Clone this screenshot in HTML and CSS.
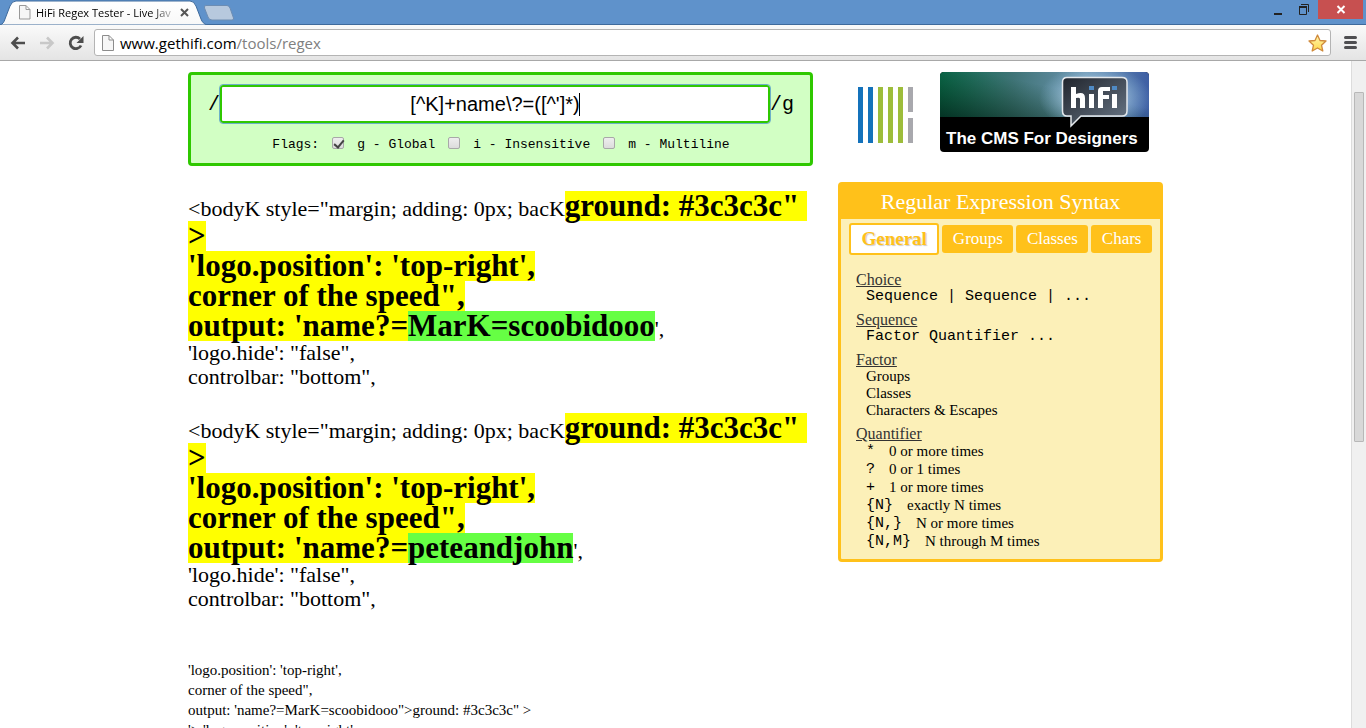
FILE: index.html
```html
<!DOCTYPE html>
<html lang="en">
<head>
<meta charset="utf-8">
<title>HiFi Regex Tester - Live JavaScript Regular Expression Tester</title>
<link rel="stylesheet" href="styles.css">
</head>
<body>
<header class="browser">
  <div class="titlebar">
    <div class="tab">
      <svg class="tab-shape" width="208" height="25" viewBox="0 0 208 25" aria-hidden="true">
        <defs><linearGradient id="tabfill" x1="0" y1="0" x2="0" y2="1"><stop offset="0" stop-color="#fff"/><stop offset="1" stop-color="#f8f8f8"/></linearGradient></defs>
        <path d="M0 25C3 24 4 22 5 19L10 6Q12 1 16 1H190Q194 1 196 6L201 19C202 22 204 24 207 25Z" fill="url(#tabfill)" stroke="#3e6a9c"/>
      </svg>
      <svg class="tab-page" width="12" height="15" viewBox="0 0 12 15" aria-hidden="true"><path d="M.5.5H7L11 4.500V14H.5ZM7 .5V4.500H11" fill="#f6f6f6" stroke="#999"/></svg>
      <span class="tab-title">HiFi Regex Tester - Live Jav</span>
      <button class="tab-close" aria-label="Close tab"><svg width="9" height="9" viewBox="0 0 9 9"><path d="M1 1L8 8M8 1L1 8" stroke="#555" stroke-width="2"/></svg></button>
    </div>
    <button class="new-tab" aria-label="New tab"><svg width="32" height="16" viewBox="0 0 32 16"><path d="M3 .5H24Q26 .5 27 3L30.500 13Q31 15 29 15H9Q6 15 5 12L1.500 3Q.8.5 3 .5Z" fill="#b7c9de" stroke="#6d8db3"/></svg></button>
    <div class="window-controls">
      <button class="win-btn" aria-label="Minimize"><svg width="12" height="14" viewBox="0 0 12 14"><path d="M2 11H10" stroke="#222" stroke-width="2"/></svg></button>
      <button class="win-btn" aria-label="Restore"><svg width="12" height="14" viewBox="0 0 12 14"><path d="M1.500 4V11.500H8.500V4M3 1.500H10.500V9" fill="none" stroke="#222"/><path d="M1 4H9" stroke="#222" stroke-width="2"/></svg></button>
      <button class="win-btn win-close" aria-label="Close"><svg width="10" height="9" viewBox="0 0 10 9"><path d="M1.500 1L8.500 8M8.500 1L1.500 8" stroke="#fff" stroke-width="2"/></svg></button>
    </div>
  </div>
  <nav class="toolbar">
    <button class="nav-btn" aria-label="Back"><svg width="16" height="14" viewBox="0 0 16 14"><path d="M15 7H2.500M8 1.500L2.500 7L8 12.500" fill="none" stroke="#4d4d4d" stroke-width="2.600"/></svg></button>
    <button class="nav-btn" aria-label="Forward"><svg width="16" height="14" viewBox="0 0 16 14"><path d="M1 7H13.500M8 1.500L13.500 7L8 12.500" fill="none" stroke="#c8c8c8" stroke-width="2.600"/></svg></button>
    <button class="nav-btn" aria-label="Reload"><svg width="16" height="16" viewBox="0 0 16 16"><path d="M13 10.500A5.700 5.700 0 1 1 12 4" fill="none" stroke="#4d4d4d" stroke-width="2.800"/><path d="M15.500 1V8H8.500Z" fill="#4d4d4d"/></svg></button>
    <div class="omnibox">
      <svg width="12" height="16" viewBox="0 0 12 16" aria-hidden="true"><path d="M.5.5H7L11.500 5V15.500H.5ZM7 .5V5H11.500" fill="#f6f6f6" stroke="#8c8c8c"/></svg>
      <span class="url">www.gethifi.com<span class="url-path">/tools/regex</span></span>
      <button class="star" aria-label="Bookmark"><svg width="19" height="18" viewBox="0 0 19 18"><defs><linearGradient id="gold" x1="0" y1="0" x2="0" y2="1"><stop offset="0" stop-color="#fff6b0"/><stop offset="1" stop-color="#ffd84a"/></linearGradient></defs><path d="M9.500 1L12 6.500L18 7L13.500 11.200L14.800 17L9.500 14L4.200 17L5.500 11.200L1 7L7 6.500Z" fill="url(#gold)" stroke="#d08a3c" stroke-width="1.300" stroke-linejoin="round"/></svg></button>
    </div>
    <button class="nav-btn menu" aria-label="Menu"><svg width="13" height="13" viewBox="0 0 13 13"><path d="M1.500 1.500H11.500M1.500 6.500H11.500M1.500 11.500H11.500" stroke="#4f4f52" stroke-width="3" stroke-linecap="round"/></svg></button>
  </nav>
</header>

<div class="viewport">
  <div class="page">
    <main class="main">
      <form class="regex-box">
        <div class="regex-row">
          <span>/</span>
          <div class="field">
            <input class="regex-input" type="text" aria-label="Regular expression" value="[^K]+name\?=([^']*)">
            <span class="caret"></span>
          </div>
          <span>/g</span>
        </div>
        <div class="flags">
          <span>Flags:</span>
          <label class="flag"><input type="checkbox" checked>g - Global</label>
          <label class="flag"><input type="checkbox">i - Insensitive</label>
          <label class="flag"><input type="checkbox">m - Multiline</label>
        </div>
      </form>
      <pre class="result">&lt;bodyK style="margin; adding: 0px; bacK<mark>ground: #3c3c3c" </mark>
<mark>&gt;</mark>
<mark>'logo.position': 'top-right',</mark>
<mark>corner of the speed",</mark>
<mark>output: 'name?=</mark><mark class="group">MarK=scoobidooo</mark>',
'logo.hide': "false",
controlbar: "bottom",

&lt;bodyK style="margin; adding: 0px; bacK<mark>ground: #3c3c3c" </mark>
<mark>&gt;</mark>
<mark>'logo.position': 'top-right',</mark>
<mark>corner of the speed",</mark>
<mark>output: 'name?=</mark><mark class="group">peteandjohn</mark>',
'logo.hide': "false",
controlbar: "bottom",</pre>
      <pre class="matches">'logo.position': 'top-right',
corner of the speed",
output: 'name?=MarK=scoobidooo"&gt;ground: #3c3c3c" &gt;
'&gt; 'logo.position': 'top-right',</pre>
    </main>
    <aside class="side">
      <div class="brands">
        <svg width="55" height="56" viewBox="0 0 55 56" role="img" aria-label="Logo"><path d="M0 0H5V56H0ZM10 0H15V56H10Z" fill="#1472bb"/><path d="M20 0H25V56H20ZM30 0H35V56H30ZM40 0H45V56H40Z" fill="#9dbd3b"/><path d="M50 0H55V25H50ZM50 31H55V56H50Z" fill="#a8a8ad"/></svg>
        <a class="banner" href="#">
          <svg width="209" height="80" viewBox="0 0 209 80">
            <defs>
              <linearGradient id="sky" x1="0" y1="0" x2="1" y2="0"><stop offset="0" stop-color="#0b6a4c"/><stop offset=".35" stop-color="#3f7477"/><stop offset=".7" stop-color="#6d94b0"/><stop offset="1" stop-color="#3e5fa4"/></linearGradient>
              <linearGradient id="shade" x1="1" y1="0" x2="0" y2="1"><stop offset=".4" stop-color="#031" stop-opacity="0"/><stop offset="1" stop-color="#021c14" stop-opacity=".7"/></linearGradient>
              <radialGradient id="glow"><stop offset="0" stop-color="#d6ecf6" stop-opacity=".9"/><stop offset=".6" stop-color="#a8cde6" stop-opacity=".5"/><stop offset="1" stop-color="#8fbfe0" stop-opacity="0"/></radialGradient>
              <linearGradient id="bubble" x1="0" y1="0" x2="1" y2="1"><stop offset="0" stop-color="#20242c"/><stop offset="1" stop-color="#6a7888"/></linearGradient>
              <clipPath id="skyclip"><path d="M0 45V4Q0 0 4 0H205Q209 0 209 4V45Z"/></clipPath>
            </defs>
            <rect width="209" height="80" rx="4"/>
            <g clip-path="url(#skyclip)">
              <rect width="209" height="45" fill="url(#sky)"/>
              <rect width="209" height="45" fill="url(#shade)"/>
              <ellipse cx="155" cy="26" rx="56" ry="34" fill="url(#glow)"/>
            </g>
            <path d="M127 5.500H182Q187 5.500 187 10V39Q187 44 182 44H141L131 54V44H127Q122.500 44 122.500 39V10Q122.500 5.500 127 5.500Z" fill="url(#bubble)" stroke="#e4e8ec" stroke-width="1.500"/>
            <path d="M131 15H136V22Q145 19 145 26V36H140V27Q140 25 136 26V36H131ZM149 22H154V36H149ZM158 36V19Q158 15 162 15H170V19H163V23H169V27H163V36ZM172 22H177V36H172Z" fill="#fff"/>
            <path d="M149 14H154V18H149ZM172 14H177V18H172Z" fill="#4f8ac4"/>
            <text class="banner-text" x="6" y="72">The CMS For Designers</text>
          </svg>
        </a>
      </div>
      <section class="syntax">
        <h2>Regular Expression Syntax</h2>
        <div class="tabs">
          <button class="active">General</button><button>Groups</button><button>Classes</button><button>Chars</button>
        </div>
        <dl class="terms">
          <dt>Choice</dt>
          <dd><code>Sequence | Sequence | ...</code></dd>
          <dt>Sequence</dt>
          <dd><code>Factor Quantifier ...</code></dd>
          <dt>Factor</dt>
          <dd>Groups</dd>
          <dd>Classes</dd>
          <dd>Characters &amp; Escapes</dd>
          <dt>Quantifier</dt>
          <dd class="quant"><code>*</code><span>0 or more times</span></dd>
          <dd class="quant"><code>?</code><span>0 or 1 times</span></dd>
          <dd class="quant"><code>+</code><span>1 or more times</span></dd>
          <dd class="quant"><code>{N}</code><span>exactly N times</span></dd>
          <dd class="quant"><code>{N,}</code><span>N or more times</span></dd>
          <dd class="quant"><code>{N,M}</code><span>N through M times</span></dd>
        </dl>
      </section>
    </aside>
  </div>
  <div class="scrollbar"><div class="thumb"></div></div>
</div>
</body>
</html>
```
FILE: styles.css
```css
* { box-sizing: border-box; }
body {
  margin: 0;
  height: 100vh;
  display: flex;
  flex-direction: column;
  overflow: hidden;
  background: #fff;
  color: #000;
  font-family: Georgia, "Liberation Serif", serif;
}
button {
  border: 0;
  padding: 0;
  background: none;
  font: inherit;
  display: flex;
  align-items: center;
  justify-content: center;
}
svg { display: block; flex: none; }

/* Browser frame */
.browser { flex: none; font-family: "Segoe UI", "Open Sans", sans-serif; }
.titlebar {
  height: 25px;
  display: flex;
  align-items: flex-start;
  background: #5f92cb;
  box-shadow: inset 0 -1px #3e6a9c;
}
.tab {
  position: relative;
  width: 203px;
  height: 25px;
  display: flex;
  align-items: center;
  padding-left: 19px;
}
.tab-shape { position: absolute; left: 0; top: 0; }
.tab-page { position: relative; }
.tab-title {
  position: relative;
  width: 138px;
  margin-left: 5px;
  white-space: nowrap;
  font-size: 11px;
  color: transparent;
  background: linear-gradient(90deg, #000 115px, #ccc 138px);
  background-clip: text;
  -webkit-background-clip: text;
}
.tab-close { position: relative; margin-left: 6px; }
.new-tab { margin-top: 5px; }
.window-controls { margin-left: auto; margin-right: 3px; display: flex; }
.win-btn { width: 26px; height: 19px; }
.win-close { width: 45px; margin-left: 1px; background: #c75050; }
.toolbar {
  height: 36px;
  display: flex;
  align-items: center;
  padding: 0 8px 0 10px;
  gap: 13px;
  background: linear-gradient(#fafafa, #e4e4e4);
  border-bottom: 1px solid #a8a8a8;
}
.nav-btn { width: 16px; height: 24px; }
.omnibox {
  flex: 1;
  height: 27px;
  display: flex;
  align-items: center;
  padding: 0 3px 0 7px;
  margin-left: -3px;
  background: #fff;
  border: 1px solid #b4b4b4;
  border-radius: 3px;
}
.url { margin-left: 6px; font-size: 15px; line-height: 24px; }
.url-path { color: #808080; }
.star { margin-left: auto; }
.menu { margin-left: -2px; }

/* Document area */
.viewport { flex: 1; min-height: 0; display: flex; overflow: hidden; }
.page {
  flex: 1;
  display: flex;
  justify-content: center;
  align-items: flex-start;
  gap: 25px;
  padding-top: 11px;
}
.main { width: 100%; max-width: 625px; }
.side { width: 325px; }
.scrollbar {
  width: 15px;
  padding: 31px 2px 0;
  background: #f0f0f0;
  border-left: 1px solid #dcdcdc;
}
.thumb { height: 55%; background: #d8d8d8; border: 1px solid #b8b8b8; border-radius: 1px; }

/* Expression form */
.regex-box {
  padding: 10px 16px 8px 17px;
  background: #d2ffc4;
  border: 3px solid #2fc800;
  border-radius: 4px;
  font-family: "Courier New", "Liberation Mono", monospace;
}
.regex-row { display: flex; align-items: center; font-size: 20px; }
.field { flex: 1; position: relative; }
.regex-input {
  display: block;
  width: 100%;
  height: 38px;
  padding: 0;
  border: 2px solid #2fc800;
  border-radius: 3px;
  outline: 1px solid #6cb0c8;
  text-align: center;
  font: 20px Arial, "Liberation Sans", sans-serif;
}
.caret { position: absolute; left: calc(50% + 84px); top: 8px; width: 1px; height: 23px; background: #000; }
.flags {
  display: flex;
  justify-content: center;
  align-items: center;
  gap: 13px;
  margin-top: 12px;
  font-size: 13px;
  line-height: 20px;
}
.flag { display: flex; align-items: center; gap: 13px; }
.flag input {
  appearance: none;
  width: 12px;
  height: 12px;
  margin: 0 0 4px;
  border: 1px solid #a8a8a8;
  border-radius: 2px;
  background: linear-gradient(#eee, #dcdcdc);
}
.flag input:checked::before {
  content: "";
  display: block;
  width: 4px;
  height: 8px;
  margin: 0 3px;
  border: solid #444;
  border-width: 0 2px 2px 0;
  transform: rotate(40deg);
}

/* Highlighted result */
.result {
  isolation: isolate;
  margin: 25px 0 0;
  font: 22px/24px Georgia, "Liberation Serif", serif;
}
.result mark {
  position: relative;
  display: inline-block;
  background: none;
  color: #000;
  font-size: 31px;
  font-weight: bold;
  line-height: 30px;
}
/* Fills sit behind every line so that descenders stay visible */
.result mark::before {
  content: "";
  position: absolute;
  inset: 0;
  z-index: -1;
  background: #ff0;
}
.result .group::before { background: #6f4; }
.matches {
  margin: 49px 0 0;
  font: 15px/20px "Times New Roman", "Liberation Serif", serif;
}

/* Side column */
.brands { display: flex; align-items: center; justify-content: space-between; padding: 0 14px 0 20px; }
.brands > svg { margin-top: 6px; }
.banner-text { font: bold 17px Arial, "Liberation Sans", sans-serif; fill: #fff; }
.syntax {
  margin-top: 30px;
  padding-bottom: 9px;
  background: #fcf0b8;
  border: 3px solid #ffc11a;
  border-radius: 4px;
}
.syntax h2 {
  margin: 0;
  background: #ffc11a;
  color: #fff;
  text-align: center;
  font-size: 22px;
  font-weight: normal;
  line-height: 34px;
}
.tabs { display: flex; align-items: center; gap: 3px; padding: 4px 8px 0; }
.tabs button {
  flex: 1 1 auto;
  height: 28px;
  border-radius: 3px;
  background: #ffc11a;
  color: #fff;
  font-size: 17px;
}
.tabs .active {
  height: 32px;
  background: #fff;
  border: 2px solid #ffc11a;
  color: #ffc11a;
  font-size: 19px;
  font-weight: bold;
  text-shadow: 1px 1px 1px #ccc;
}
.terms { margin: 16px 15px 0; font-size: 15px; line-height: 17px; }
.terms dt { color: #333; text-decoration: underline; font-size: 16px; }
.terms dd { margin: 0 0 0 10px; }
.terms dd + dt { margin-top: 6px; }
.terms code { display: block; font: 15px/17px "Courier New", "Liberation Mono", monospace; }
.terms dd.quant { display: flex; align-items: center; gap: 14px; line-height: 18px; }
```
